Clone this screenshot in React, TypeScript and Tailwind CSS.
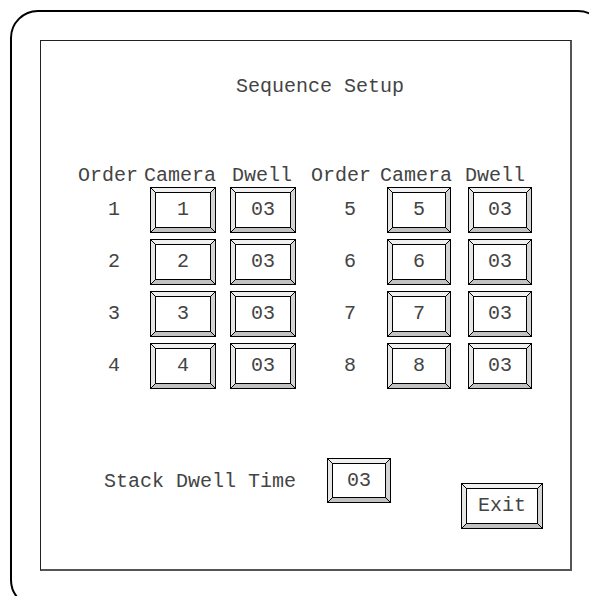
import React from "react";

const FONT = { fontFamily: '"Liberation Mono", "Courier New", monospace' };

function Bevel({ w, h, text }: { w: number; h: number; text: string }) {
  const i = 5;
  return (
    <div className="relative flex items-center justify-center shrink-0" style={{ width: w, height: h }}>
      <svg className="absolute inset-0" width={w} height={h} viewBox={`0 0 ${w} ${h}`}>
        <rect x={0} y={0} width={w} height={h} fill="#ffffff" />
        <polygon points={`1,1 ${w - 1},1 ${w - i},${i} ${i},${i}`} fill="#f0f0f0" />
        <polygon points={`1,1 ${i},${i} ${i},${h - i} 1,${h - 1}`} fill="#e6e6e6" />
        <polygon points={`${w - 1},1 ${w - 1},${h - 1} ${w - i},${h - i} ${w - i},${i}`} fill="#d4d4d4" />
        <polygon points={`1,${h - 1} ${w - 1},${h - 1} ${w - i},${h - i} ${i},${h - i}`} fill="#c2c2c2" />
        <rect x={0.5} y={0.5} width={w - 1} height={h - 1} fill="none" stroke="#000" strokeWidth={1} />
        <rect x={i + 0.5} y={i + 0.5} width={w - 2 * i - 1} height={h - 2 * i - 1} fill="none" stroke="#000" strokeWidth={1} />
        <line x1={1} y1={1} x2={i + 0.5} y2={i + 0.5} stroke="#000" strokeWidth={1} />
        <line x1={w - 1} y1={1} x2={w - i - 0.5} y2={i + 0.5} stroke="#000" strokeWidth={1} />
        <line x1={1} y1={h - 1} x2={i + 0.5} y2={h - i - 0.5} stroke="#000" strokeWidth={1} />
        <line x1={w - 1} y1={h - 1} x2={w - i - 0.5} y2={h - i - 0.5} stroke="#000" strokeWidth={1} />
      </svg>
      <span className="relative text-[20px] leading-[24px] text-[#444]">{text}</span>
    </div>
  );
}

const rows = [
  [1, 5],
  [2, 6],
  [3, 7],
  [4, 8],
];

export default function App() {
  return (
    <div className="relative w-[589px] h-[596px] overflow-hidden bg-white" style={FONT}>
      <div className="absolute left-[10px] top-[10px] w-[596px] h-[598px] border-2 border-black rounded-[28px] p-[28px]">
        <div className="w-[532px] h-[531px] border-t border-l border-r-2 border-b-2 border-t-[#222] border-l-[#222] border-r-[#555] border-b-[#555] flex flex-col text-[#444] text-[20px] leading-[24px]">
          <div className="mt-[34px] ml-[195px] h-[24px] whitespace-nowrap">Sequence Setup</div>

          <div className="mt-[65px] h-[23px] flex pl-[37px] whitespace-nowrap">
            <div className="w-[60px] flex justify-center">Order</div>
            <div className="w-[84px] flex justify-center">Camera</div>
            <div className="w-[80px] flex justify-center">Dwell</div>
            <div className="w-[78px] flex justify-center">Order</div>
            <div className="w-[72px] flex justify-center">Camera</div>
            <div className="w-[86px] flex justify-center">Dwell</div>
          </div>

          <div className="flex flex-col gap-[6px] pl-[37px]">
            {rows.map(([a, b]) => (
              <div key={a} className="flex items-center h-[46px]">
                <div className="w-[72px] flex justify-center">{a}</div>
                <Bevel w={66} h={46} text={String(a)} />
                <div className="w-[14px]" />
                <Bevel w={66} h={46} text="03" />
                <div className="w-[91px] pl-[17px] flex justify-center">{b}</div>
                <Bevel w={64} h={46} text={String(b)} />
                <div className="w-[17px]" />
                <Bevel w={64} h={46} text="03" />
              </div>
            ))}
          </div>

          <div className="mt-[69px] flex items-start">
            <div className="ml-[63px] mt-[12px] whitespace-nowrap">Stack Dwell Time</div>
            <div className="ml-[31px]">
              <Bevel w={64} h={45} text="03" />
            </div>
            <div className="ml-[70px] mt-[25px]">
              <Bevel w={82} h={46} text="Exit" />
            </div>
          </div>
        </div>
      </div>
    </div>
  );
}
